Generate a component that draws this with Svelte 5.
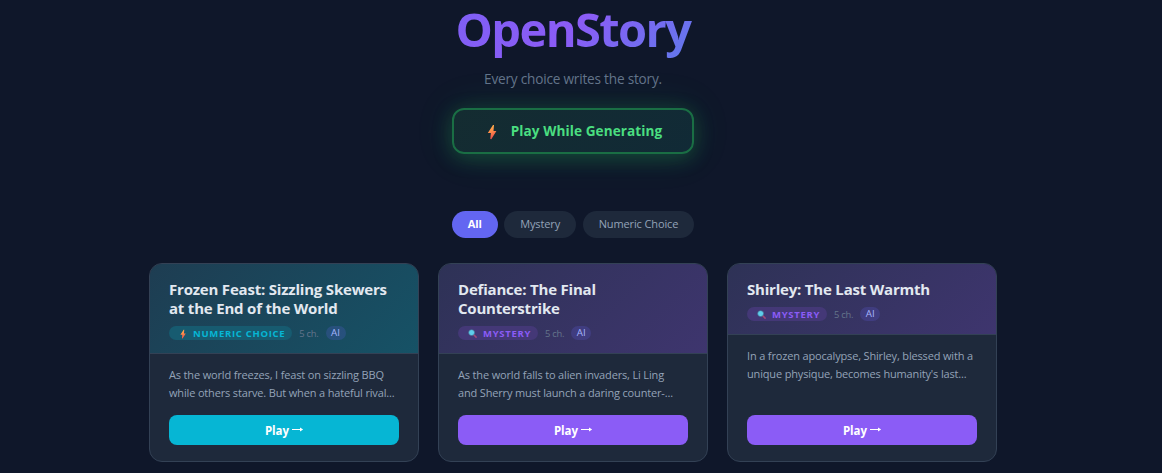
<script lang="ts">
  type Kind = 'numeric' | 'mystery';

  interface Story {
    title: string[];
    kind: Kind;
    chapters: number;
    summary: string[];
  }

  const labels: Record<Kind, string> = {
    numeric: 'Numeric Choice',
    mystery: 'Mystery'
  };

  const filters = ['All', 'Mystery', 'Numeric Choice'];

  const stories: Story[] = [
    {
      title: ['Frozen Feast: Sizzling Skewers', 'at the End of the World'],
      kind: 'numeric',
      chapters: 5,
      summary: ['As the world freezes, I feast on sizzling BBQ', 'while others starve. But when a hateful rival...']
    },
    {
      title: ['Defiance: The Final', 'Counterstrike'],
      kind: 'mystery',
      chapters: 5,
      summary: ['As the world falls to alien invaders, Li Ling', 'and Sherry must launch a daring counter-...']
    },
    {
      title: ['Shirley: The Last Warmth'],
      kind: 'mystery',
      chapters: 5,
      summary: ['In a frozen apocalypse, Shirley, blessed with a', "unique physique, becomes humanity's last..."]
    }
  ];

  let active = $state('All');
</script>

{#snippet bolt()}
  <svg class="bolt" viewBox="0 0 10 16" aria-hidden="true">
    <defs>
      <linearGradient id="bolt-fill" x1="0" y1="0" x2="0.3" y2="1">
        <stop offset="0" stop-color="#ffc04d" />
        <stop offset="0.5" stop-color="#ff8f4a" />
        <stop offset="1" stop-color="#f0504a" />
      </linearGradient>
    </defs>
    <path d="M6 1 .8 9h3.1L3.3 15l1 .2L9.4 7H6.5L7 1z" fill="url(#bolt-fill)" />
  </svg>
{/snippet}

{#snippet lens()}
  <svg class="lens" viewBox="0 0 10 10" aria-hidden="true">
    <path d="M6.4 6.4 9 9" stroke="#a34878" stroke-width="1.7" stroke-linecap="round" />
    <circle cx="4" cy="4" r="3.3" fill="#5fcdec" stroke="#44708f" stroke-width="0.7" />
  </svg>
{/snippet}

<main class="page">
  <header class="hero">
    <h1>OpenStory</h1>
    <p class="tagline">Every choice writes the story.</p>
    <button class="generate" type="button">
      {@render bolt()}
      <span>Play While Generating</span>
    </button>
  </header>

  <nav class="filters">
    {#each filters as filter}
      <button type="button" class:active={active === filter} onclick={() => (active = filter)}>{filter}</button>
    {/each}
  </nav>

  <section class="grid">
    {#each stories as story}
      <article class="card {story.kind}">
        <div class="card-head">
          <h2>
            {#each story.title as line}<span>{line}</span>{/each}
          </h2>
          <div class="meta">
            <span class="tag">
              {#if story.kind === 'numeric'}{@render bolt()}{:else}{@render lens()}{/if}
              <span>{labels[story.kind]}</span>
            </span>
            <span class="chapters">{story.chapters} ch.</span>
            <span class="ai">AI</span>
          </div>
        </div>
        <div class="card-body">
          <p>
            {#each story.summary as line}<span>{line}</span>{/each}
          </p>
          <button class="play" type="button">
            Play
            <svg viewBox="0 0 12 6" aria-hidden="true">
              <path d="M0 2.5h10" stroke="currentColor" stroke-width="1" />
              <path d="M8 .5 11.2 2.5 8 4.5z" fill="currentColor" />
            </svg>
          </button>
        </div>
      </article>
    {/each}
  </section>
</main>

<style>
  :global(body) {
    background: #0f172a;
    overflow: hidden;
  }

  .page {
    box-sizing: border-box;
    width: 1146px;
    height: 473px;
    padding: 0 149px;
    color: #e2e8f0;
    font-family: 'Open Sans', 'Noto Sans', sans-serif;
  }

  h1,
  h2,
  p {
    margin: 0;
  }

  button {
    border: 0;
    padding: 0;
    font-family: inherit;
    cursor: pointer;
  }

  .hero {
    display: flex;
    flex-direction: column;
    align-items: center;
  }

  h1 {
    width: 100%;
    height: 64px;
    background: linear-gradient(135deg, #6366f1, #8b5cf6, #06b6d4);
    background-clip: text;
    -webkit-text-fill-color: transparent;
    font-size: 47px;
    font-weight: 700;
    line-height: 62px;
    letter-spacing: -1.6px;
    text-align: center;
    margin-top: -2px;
  }

  .tagline {
    height: 46px;
    color: #64748b;
    font-size: 13.6px;
    line-height: 34px;
    letter-spacing: -0.2px;
  }

  .generate {
    box-sizing: border-box;
    display: flex;
    align-items: center;
    justify-content: center;
    gap: 14px;
    width: 242px;
    height: 46px;
    padding: 0 0 1px 3px;
    border: 2px solid #1a6e44;
    border-radius: 12px;
    background: linear-gradient(135deg, #142c31, #112a36);
    box-shadow: 0 4px 20px rgba(34, 197, 94, 0.25), 0 0 40px rgba(34, 197, 94, 0.12);
    color: #4ade80;
    font-size: 13.6px;
    font-weight: 700;
    letter-spacing: 0.08px;
  }

  .generate .bolt {
    width: 10px;
    height: 16px;
    margin-top: 2px;
  }

  .filters {
    display: flex;
    justify-content: center;
    gap: 6.5px;
    margin-top: 57px;
  }

  .filters button {
    height: 27px;
    padding: 0 16px 1px;
    border-radius: 14px;
    background: #1e293b;
    color: #94a3b8;
    font-size: 11px;
    line-height: 26px;
    letter-spacing: -0.12px;
  }

  .filters .active {
    background: #6366f1;
    color: #fff;
    font-weight: 700;
  }

  .grid {
    display: grid;
    grid-template-columns: repeat(3, 270px);
    justify-content: space-between;
    height: 199px;
    margin-top: 25px;
  }

  .card {
    display: flex;
    flex-direction: column;
    overflow: hidden;
    border: 1px solid #334155;
    border-radius: 13px;
    background: #1e293b;
  }

  .card-head {
    padding: 16px 19px 13px;
    border-bottom: 1px solid #334155;
  }

  .numeric .card-head {
    background: linear-gradient(135deg, #1e3d52, #165266);
  }

  .mystery .card-head {
    background: linear-gradient(135deg, #2e3256, #3e356e);
  }

  h2 {
    font-size: 15px;
    font-weight: 700;
    line-height: 19px;
    letter-spacing: -0.2px;
    white-space: nowrap;
  }

  h2 span,
  .card-body p span {
    display: block;
    width: max-content;
  }

  .meta {
    display: flex;
    align-items: center;
    gap: 7px;
    height: 14px;
    margin-top: 8px;
  }

  .tag {
    display: flex;
    align-items: center;
    gap: 6px;
    height: 14px;
    padding: 0 7px 0 10px;
    border-radius: 7px;
    font-size: 9.5px;
    font-weight: 700;
    letter-spacing: 0.7px;
    text-transform: uppercase;
  }

  .numeric .tag {
    background: #175b70;
    color: #06b6d4;
  }

  .mystery .tag {
    background: #443877;
    color: #8b5cf6;
  }

  .tag .bolt {
    width: 8px;
    height: 10px;
    margin-top: 1px;
  }

  .tag .lens {
    width: 9px;
    height: 9px;
    margin-top: 1px;
  }

  .chapters {
    color: #64748b;
    font-size: 9.4px;
    letter-spacing: -0.25px;
  }

  .ai {
    padding: 0 5.5px;
    border-radius: 7px;
    background: rgba(99, 102, 241, 0.2);
    color: #a5b4fc;
    font-size: 9.8px;
    line-height: 14px;
  }

  .card-body {
    display: flex;
    flex: 1;
    flex-direction: column;
    justify-content: space-between;
    padding: 12px 19px 16px;
  }

  .card-body p {
    color: #94a3b8;
    font-size: 11px;
    line-height: 18px;
    letter-spacing: -0.16px;
    white-space: nowrap;
  }

  .play {
    display: flex;
    align-items: center;
    justify-content: center;
    gap: 3px;
    height: 30px;
    padding-left: 1px;
    border-radius: 8px;
    background: #8b5cf6;
    color: #fff;
    font-size: 11.5px;
    font-weight: 700;
  }

  .numeric .play {
    background: #06b6d4;
  }

  .play svg {
    width: 12px;
    height: 6px;
  }
</style>
